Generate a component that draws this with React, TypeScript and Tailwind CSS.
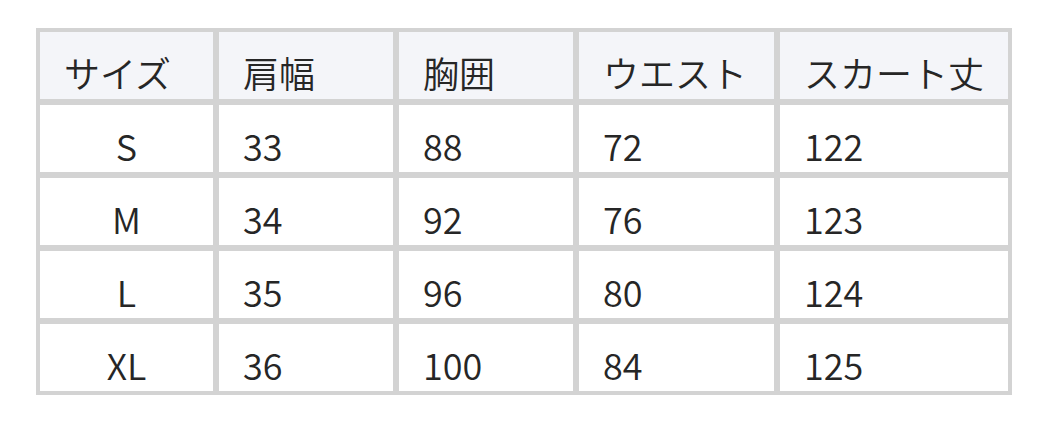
const HEADERS = ["サイズ", "肩幅", "胸囲", "ウエスト", "スカート丈"];

const WIDTHS = ["w-[177px]", "w-[178px]", "w-[178px]", "w-[199px]", "w-[232px]"];

const ROWS = [
  ["S", "33", "88", "72", "122"],
  ["M", "34", "92", "76", "123"],
  ["L", "35", "96", "80", "124"],
  ["XL", "36", "100", "84", "125"],
];

export default function App() {
  return (
    <div className="min-h-screen bg-white pt-[28px] pl-[36px] font-['Noto_Sans_CJK_JP','Noto_Sans',sans-serif] font-[350] text-[#262626]">
      <table className="table-fixed w-[976px] border-separate border-spacing-[2px] bg-[#d3d3d3] text-[36px]">
        <thead>
          <tr>
            {HEADERS.map((h, i) => (
              <th
                key={h}
                className={`${WIDTHS[i]} h-[71px] p-0 border-2 border-[#d3d3d3] bg-[#f4f5f9] text-left align-top font-[350]`}
              >
                <div className="pt-[22px] pl-[24px] leading-[36px] whitespace-nowrap">{h}</div>
              </th>
            ))}
          </tr>
        </thead>
        <tbody>
          {ROWS.map((row) => (
            <tr key={row[0]}>
              {row.map((cell, i) => (
                <td
                  key={i}
                  className={`h-[71px] p-0 border-2 border-[#d3d3d3] bg-white align-top ${i === 0 ? "text-center" : "text-left"}`}
                >
                  <div className={`pt-[22px] leading-[36px] ${i === 0 ? "" : "pl-[24px]"}`}>{cell}</div>
                </td>
              ))}
            </tr>
          ))}
        </tbody>
      </table>
    </div>
  );
}
